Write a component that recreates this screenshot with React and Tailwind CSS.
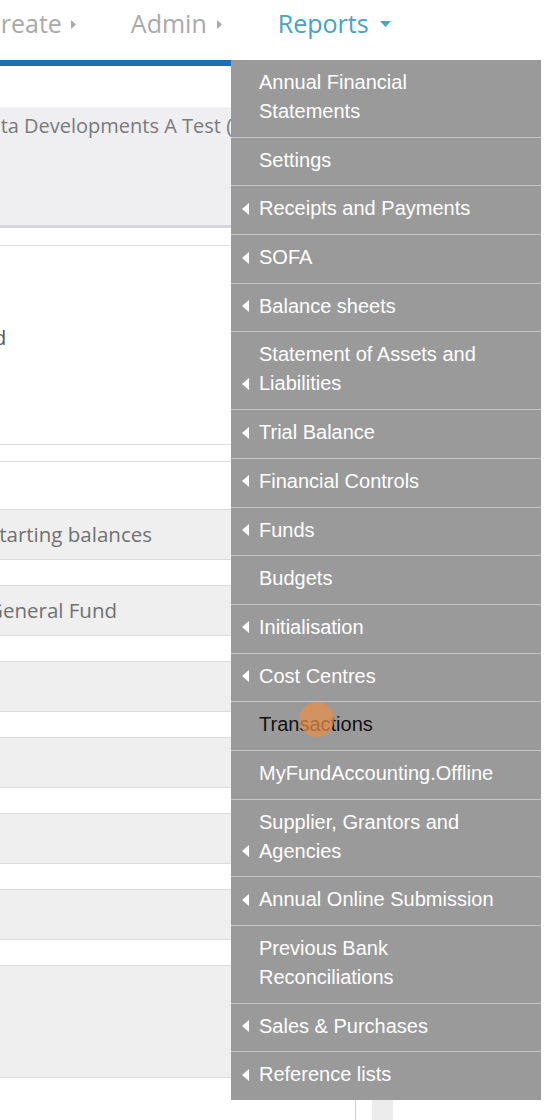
import React from "react";

const items = [
  { t: ["Annual Financial", "Statements"], c: false },
  { t: ["Settings"], c: false },
  { t: ["Receipts and Payments"], c: true },
  { t: ["SOFA"], c: true },
  { t: ["Balance sheets"], c: true },
  { t: ["Statement of Assets and", "Liabilities"], c: true },
  { t: ["Trial Balance"], c: true },
  { t: ["Financial Controls"], c: true },
  { t: ["Funds"], c: true },
  { t: ["Budgets"], c: false },
  { t: ["Initialisation"], c: true },
  { t: ["Cost Centres"], c: true },
  { t: ["Transactions"], c: false, dark: true },
  { t: ["MyFundAccounting.Offline"], c: false },
  { t: ["Supplier, Grantors and", "Agencies"], c: true },
  { t: ["Annual Online Submission"], c: true },
  { t: ["Previous Bank", "Reconciliations"], c: false },
  { t: ["Sales & Purchases"], c: true },
  { t: ["Reference lists"], c: true },
];

function RightTri({ color = "#a9a9a9" }) {
  return (
    <svg width="5" height="9" viewBox="0 0 5 9" className="shrink-0">
      <path d="M0 0 L5 4.5 L0 9 Z" fill={color} />
    </svg>
  );
}

function GrayRow({ children, h = "h-[51px]" }) {
  return (
    <div className={`${h} bg-[#efefef] border-y border-[#dcdcdc] flex items-center overflow-hidden whitespace-nowrap text-[20.5px] text-[#717171]`}>
      {children}
    </div>
  );
}

function Spacer() {
  return <div className="h-[25px] bg-white" />;
}

export default function App() {
  return (
    <div className="relative w-[554px] h-[1120px] overflow-hidden bg-white font-['Open_Sans',sans-serif]">
      <div className="w-[541px]">
        {/* Top nav */}
        <div className="h-[60px] pt-[6px] flex items-start whitespace-nowrap text-[25px] leading-[34px]">
          <div className="flex items-center text-[#a9a9a9]">
            <span className="ml-[-15px]">Create</span>
            <span className="ml-[9px] mt-[3px]"><RightTri /></span>
          </div>
          <div className="flex items-center text-[#a9a9a9] ml-[55px]">
            <span>Admin</span>
            <span className="ml-[10px] mt-[3px]"><RightTri /></span>
          </div>
          <div className="flex items-center text-[#48a2c2] ml-[56px]">
            <span>Reports</span>
            <svg width="11" height="6" viewBox="0 0 11 6" className="ml-[11px] mt-[1px]">
              <path d="M0 0 L11 0 L5.5 6 Z" fill="#48a2c2" />
            </svg>
          </div>
        </div>
        <div className="h-[6px] bg-[#1d6fb4]" />

        {/* Underlying content */}
        <div className="h-[41px]" />
        <div className="h-[121px] bg-[#efeef0] border-b-[3px] border-[#d6d6de] pt-[5px] overflow-hidden whitespace-nowrap text-[20px] leading-[27px] text-[#7a7a7a]">
          <span className="ml-[-25px]">Data Developments A Test (Charity)</span>
        </div>
        <div className="h-[17px]" />
        <div className="h-px bg-[#e2e2e2]" />
        <div className="h-[78px]" />
        <div className="h-[27px] leading-[27px] text-[20px] text-[#555] overflow-hidden whitespace-nowrap">
          <span className="ml-[-6px]">d</span>
        </div>
        <div className="h-[93px]" />
        <div className="h-px bg-[#dedede]" />
        <div className="h-[16px]" />
        <div className="h-px bg-[#dedede]" />
        <div className="h-[47px]" />

        <GrayRow><span className="ml-[-12px]">Starting balances</span></GrayRow>
        <Spacer />
        <GrayRow><span className="ml-[-12px]">General Fund</span></GrayRow>
        <Spacer />
        <GrayRow />
        <Spacer />
        <GrayRow />
        <Spacer />
        <GrayRow />
        <Spacer />
        <GrayRow />
        <Spacer />
        <GrayRow h="h-[113px]" />
        <div className="h-[60px] flex pl-[355px]">
          <div className="w-px bg-[#cfcfcf]" />
          <div className="ml-[16px] mt-[20px] w-[21px] bg-[#ececec]" />
        </div>
      </div>

      {/* Dropdown menu */}
      <div className="absolute left-[231px] top-[60px] w-[310px] bg-[#9a9a9a] font-['Liberation_Sans',Arial,sans-serif] text-[20px] leading-[29px]">
        {items.map((it, i) => (
          <div
            key={i}
            className={`relative flex items-end pl-[11px] pt-[8px] pb-[10.7px] ${i < items.length - 1 ? "border-b border-[#c6c6c6]" : ""}`}
          >
            <div className="w-[17px] h-[29px] flex items-center shrink-0">
              {it.c && (
                <svg width="7" height="12" viewBox="0 0 7 12">
                  <path d="M7 0 L0 6 L7 12 Z" fill="#ffffff" />
                </svg>
              )}
            </div>
            <div className={it.dark ? "text-[#111111]" : "text-white"}>
              {it.t.map((l, j) => (
                <div key={j} className="whitespace-nowrap">{l}</div>
              ))}
            </div>
            {it.dark && (
              <div className="absolute left-[68px] top-[0px] w-[35px] h-[35px] rounded-full bg-[rgba(232,143,72,0.72)]" />
            )}
          </div>
        ))}
      </div>
    </div>
  );
}
